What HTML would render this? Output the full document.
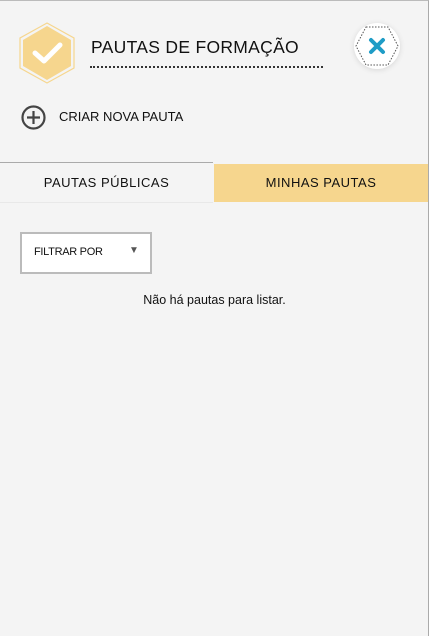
<!DOCTYPE html>
<html><head><meta charset="utf-8"><style>
*{margin:0;padding:0;box-sizing:border-box}
html,body{width:429px;height:636px;overflow:hidden}
body{background:#f4f4f4;font-family:"Liberation Sans",sans-serif;color:#111;position:relative;border-top:1px solid #bbb;border-right:1px solid #aaa}
.a{position:absolute}
</style></head><body>
<svg class="a" style="left:18px;top:20px" width="60" height="64" viewBox="0 0 60 64">
<polygon points="29,2 56,17 56,47 29,62 2,47 2,17" fill="none" stroke="#f6d68e" stroke-width="1.2"/>
<polygon points="29,5 53,19 53,45 29,59 5,45 5,19" fill="#f6d68e"/>
<path d="M17 32 L26 40 L42 24" fill="none" stroke="#fff" stroke-width="5" stroke-linecap="round" stroke-linejoin="round"/>
</svg>
<div class="a" style="left:91px;top:36px;font-size:17.5px;letter-spacing:0.3px">PAUTAS DE FORMAÇÃO</div>
<div class="a" style="left:90px;top:65px;width:233px;border-top:2px dotted #333"></div>
<div class="a" style="left:354px;top:22px;width:46px;height:46px;border-radius:50%;background:#fff;box-shadow:0 1px 6px rgba(0,0,0,.12)"></div>
<svg class="a" style="left:354px;top:22px" width="46" height="46" viewBox="0 0 46 46">
<polygon points="12,4 34,4 44,23 34,42 12,42 2,23" fill="none" stroke="#555" stroke-width="1" stroke-dasharray="1.5 1.5"/>
<path d="M17 17 L29 29 M29 17 L17 29" stroke="#1e9cc6" stroke-width="4" stroke-linecap="round"/>
</svg>
<svg class="a" style="left:21px;top:104px" width="25" height="25" viewBox="0 0 25 25">
<circle cx="12.5" cy="12.5" r="11" fill="none" stroke="#444" stroke-width="2.2"/>
<path d="M12.5 6v13M6 12.5h13" stroke="#444" stroke-width="2.2"/>
</svg>
<div class="a" style="left:59px;top:108px;font-size:13px">CRIAR NOVA PAUTA</div>
<div class="a" style="left:0;top:161px;width:213px;height:41px;border-top:1px solid #aaa;border-bottom:1px solid #e8e8e8;text-align:center;line-height:40px;font-size:13px;letter-spacing:0.5px">PAUTAS PÚBLICAS</div>
<div class="a" style="left:214px;top:163px;width:214px;height:38px;background:#f6d68e;text-align:center;line-height:38px;font-size:13px;letter-spacing:0.5px">MINHAS PAUTAS</div>
<div class="a" style="left:20px;top:231px;width:132px;height:42px;background:#fff;border:2px solid #bbb"></div>
<div class="a" style="left:34px;top:245px;font-size:11px;letter-spacing:-0.3px">FILTRAR POR</div>
<div class="a" style="left:129px;top:244px;font-size:10px;color:#555">▼</div>
<div class="a" style="left:0;top:292px;width:429px;text-align:center;font-size:12.5px">Não há pautas para listar.</div>
</body></html>
